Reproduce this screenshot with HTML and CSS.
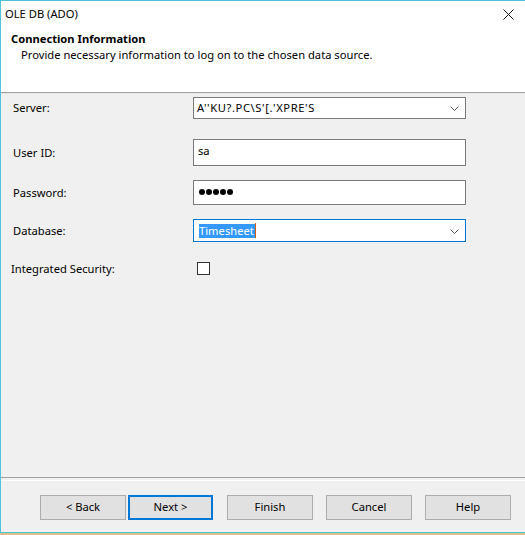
FILE: index.html
```html
<!DOCTYPE html>
<html>
<head>
<meta charset="utf-8">
<link rel="stylesheet" href="styles.css">
</head>
<body>
<div class="window">
  <div class="top">
    <div class="titlebar">
      <span class="title">OLE DB (ADO)</span>
      <svg class="close" width="11" height="11" viewBox="0 0 11 11"><path d="M0.5 0.5 L10.5 10.5 M10.5 0.5 L0.5 10.5" stroke="#111" stroke-width="1" fill="none"/></svg>
    </div>
    <div class="header">
      <div class="h-title">Connection Information</div>
      <div class="h-desc">Provide necessary information to log on to the chosen data source.</div>
    </div>
  </div>
  <div class="sep"></div>
  <div class="body">
    <div class="row r-server">
      <div class="label">Server:</div>
      <div class="combo">
        <span class="ctext">A''KU?.PC\S'[.'XPRE'S</span>
        <svg class="chev" width="9" height="5" viewBox="0 0 9 5"><path d="M0.5 0.5 L4.5 4.5 L8.5 0.5" stroke="#555" stroke-width="1" fill="none"/></svg>
      </div>
    </div>
    <div class="row r-user">
      <div class="label">User ID:</div>
      <div class="input in-user"><span class="itext">sa</span></div>
    </div>
    <div class="row r-pass">
      <div class="label">Password:</div>
      <div class="input in-pass"><span class="dots"><i></i><i></i><i></i><i></i><i></i></span></div>
    </div>
    <div class="row r-db">
      <div class="label">Database:</div>
      <div class="combo focused">
        <span class="sel">Timesheet</span><span class="caret"></span>
        <svg class="chev" width="9" height="5" viewBox="0 0 9 5"><path d="M0.5 0.5 L4.5 4.5 L8.5 0.5" stroke="#555" stroke-width="1" fill="none"/></svg>
      </div>
    </div>
    <div class="row r-int">
      <div class="label l-int">Integrated Security:</div>
      <div class="checkbox"></div>
    </div>
  </div>
  <div class="sep2"></div>
  <div class="footer">
    <button class="btn b-back">&lt; Back</button>
    <button class="btn b-next">Next &gt;</button>
    <button class="btn b-finish">Finish</button>
    <button class="btn b-gap">Cancel</button>
    <button class="btn b-gap">Help</button>
  </div>
</div>
<div class="desk"></div>
</body>
</html>
```
FILE: styles.css
```css
html, body {
  margin: 0;
  padding: 0;
}
body {
  width: 525px;
  height: 535px;
  overflow: hidden;
  background: #d7c08a;
  font-family: "Noto Sans", "Open Sans", sans-serif;
  font-size: 11.2px;
  color: #000;
}
.window {
  width: 524px;
  height: 531px;
  border-top: 1px solid #4fc3dc;
  border-left: 1px solid #4fc3dc;
  border-bottom: 1px solid #4fc3dc;
  background: #f0f0f0;
  display: flex;
  flex-direction: column;
}
.top {
  background: #fff;
  height: 91px;
  display: flex;
  flex-direction: column;
}
.titlebar {
  height: 28px;
  display: flex;
  align-items: center;
  justify-content: space-between;
  padding-left: 4px;
  padding-right: 11px;
}
.title {
  line-height: 16px;
  margin-top: -3px;
}
.close {
  display: block;
  margin-top: -2px;
}
.header {
  padding-left: 10px;
}
.h-title {
  font-weight: bold;
  line-height: 16px;
  margin-top: 2px;
}
.h-desc {
  padding-left: 10px;
  line-height: 16px;
}
.sep {
  height: 1px;
  background: #a0a0a0;
  border-bottom: 1px solid #e6e6e6;
}
.body {
  height: 380px;
  display: flex;
  flex-direction: column;
  padding-top: 3px;
}
.row {
  display: flex;
  align-items: center;
}
.label {
  width: 180px;
  padding-left: 12px;
  line-height: 16px;
}
.l-int {
  padding-left: 10px;
  width: 182px;
  margin-top: 2px;
}
.r-server { height: 22px; }
.r-user { height: 27px; margin-top: 20px; }
.r-pass { height: 25px; margin-top: 14px; }
.r-db { height: 23px; margin-top: 14px; }
.r-int { height: 14px; margin-top: 19px; }
.combo, .input {
  box-sizing: border-box;
  width: 273px;
  height: 100%;
  background: #fff;
  border: 1px solid #7a7a7a;
  display: flex;
  align-items: center;
  position: relative;
}
.combo.focused {
  border-color: #0078d7;
}
.ctext {
  padding-left: 3px;
  line-height: 16px;
  letter-spacing: 0.6px;
}
.chev {
  position: absolute;
  right: 6px;
  top: 50%;
  margin-top: -2px;
}
.input {
  align-items: flex-start;
}
.itext {
  padding-left: 4px;
  padding-top: 3px;
  line-height: 16px;
}
.in-pass {
  align-items: center;
}
.dots {
  display: flex;
  gap: 1px;
  padding-left: 5px;
  margin-top: -2px;
}
.dots i {
  display: block;
  width: 6px;
  height: 6px;
  border-radius: 50%;
  background: #000;
}
.sel {
  margin-left: 5px;
  background: #3399ff;
  color: #fff;
  line-height: 14px;
  height: 14px;
  padding-right: 1px;
}
.caret {
  width: 1px;
  height: 15px;
  background: #d06010;
}
.checkbox {
  box-sizing: border-box;
  width: 13px;
  height: 13px;
  border: 1px solid #333;
  background: #fff;
  margin-left: 4px;
}
.sep2 {
  height: 1px;
  background: #a0a0a0;
  border-bottom: 2px solid #f0f0f0;
}
.footer {
  flex: 1;
  border-top: 1px solid #fff;
  display: flex;
  align-items: flex-start;
  padding-top: 14px;
  padding-left: 39px;
}
.btn {
  box-sizing: border-box;
  width: 86px;
  height: 25px;
  margin: 0;
  padding: 0 0 2px 0;
  background: #e1e1e1;
  border: 1px solid #adadad;
  font-family: inherit;
  font-size: 11.2px;
  color: #000;
}
.b-next {
  margin-left: 2px;
  width: 85px;
  border: 2px solid #0078d7;
}
.b-finish {
  margin-left: 14px;
}
.b-gap {
  margin-left: 13px;
}
.desk {
  height: 2px;
}
```
